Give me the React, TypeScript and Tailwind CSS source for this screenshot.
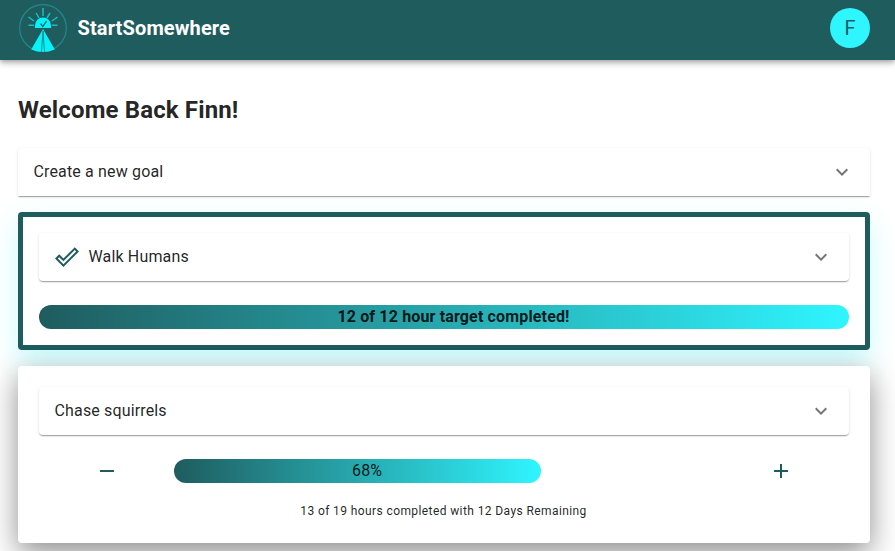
import type { ReactNode } from "react";
import { MdAdd, MdDoneOutline, MdExpandMore, MdRemove } from "react-icons/md";

function Logo() {
  return (
    <svg viewBox="0 0 48 48" className="size-12" fill="none">
      <circle cx="24" cy="24" r="23.3" stroke="#1f8a8f" strokeWidth="1.2" />
      <g stroke="#14bfc6" strokeWidth="1.5">
        <path d="M24 4v8M17.200 9l2.800 5M31 9l-3 5M9.500 13l5.500 4M38.500 13L33 17M9.500 21.300h5.500M38.500 21.300H33" />
      </g>
      <path d="M16 24v-2.500a8 8 0 0 1 16 0V24z" fill="#06f3fb" />
      <path d="M21.600 19.700l2.200 3 3.700-5.700" stroke="#1f5c5e" strokeWidth="1.3" />
      <path d="M24 25L12.200 45.500Q24 50.500 35.800 45.500z" fill="#06f3fb" />
      <path d="M24 27l-1.500 21M24 27l1.500 21" stroke="#1f8286" strokeWidth=".9" />
    </svg>
  );
}

function Accordion({
  title,
  icon,
  className = "rounded",
}: {
  title: string;
  icon?: ReactNode;
  className?: string;
}) {
  return (
    <div
      className={`flex h-12 items-center bg-white px-4 shadow-[0_2px_1px_-1px_rgba(0,0,0,0.2),0_1px_1px_0_rgba(0,0,0,0.14),0_1px_3px_0_rgba(0,0,0,0.12)] ${className}`}
    >
      {icon}
      <span className="-ml-[0.5px] grow text-base tracking-[0.15px]">{title}</span>
      <MdExpandMore className="size-6 text-black/54" />
    </div>
  );
}

export default function App() {
  return (
    <div className="h-[551px] overflow-hidden bg-white font-[Roboto,sans-serif] text-black/87">
      <header className="relative flex h-[60px] items-center bg-[#1f5c5e] pr-[25px] pl-[19px] shadow-[0_2px_4px_-1px_rgba(0,0,0,0.2),0_4px_5px_0_rgba(0,0,0,0.14),0_1px_10px_0_rgba(0,0,0,0.12)]">
        <div className="-mt-1">
          <Logo />
        </div>
        <div className="-mt-1 ml-[10.5px] grow text-xl font-bold tracking-[0.13px] text-white">StartSomewhere</div>
        <div className="-mt-1 flex size-10 items-center justify-center rounded-full bg-[#2ff5ff] text-xl text-[#1f5c5e]">
          F
        </div>
      </header>
      <main className="flex flex-col gap-4 pt-[34px] pr-[25px] pl-[18px]">
        <h1 className="mb-[6px] text-2xl leading-8 font-bold tracking-[0.13px]">Welcome Back Finn!</h1>
        <Accordion title="Create a new goal" className="rounded-t" />
        <section className="rounded border-5 border-[#1f5c5e] bg-white p-4 shadow-[0_12px_28px_0_rgba(47,245,255,0.27)]">
          <Accordion
            title="Walk Humans"
            icon={<MdDoneOutline className="mr-[10px] size-6 text-[#1f5c5e]" />}
          />
          <div className="mt-6 flex h-6 items-center justify-center rounded-full bg-linear-to-r/srgb from-[#1f5c5e] to-[#2ff5ff] pl-[19px] font-bold tracking-[0.15px]">
            12 of 12 hour target completed!
          </div>
        </section>
        <section className="h-[177px] rounded bg-white p-[21px] shadow-[0_10px_30px_0_rgba(0,0,0,0.45)]">
          <Accordion title="Chase squirrels" />
          <div className="mt-6 grid grid-cols-[135px_540px_135px] items-center">
            <button className="flex justify-center">
              <MdRemove className="size-6 text-[#1f5c5e]" />
            </button>
            <div>
              <div className="flex h-6 w-[68%] items-center justify-center rounded-full bg-linear-to-r/srgb from-[#1f5c5e] to-[#2ff5ff] pl-[19px] tracking-[0.15px]">
                68%
              </div>
            </div>
            <button className="flex justify-center pr-[2px]">
              <MdAdd className="size-6 text-[#1f5c5e]" />
            </button>
          </div>
          <p className="mt-[18px] pr-px text-center text-xs leading-5 tracking-[0.4px]">
            13 of 19 hours completed with 12 Days Remaining
          </p>
        </section>
      </main>
    </div>
  );
}
